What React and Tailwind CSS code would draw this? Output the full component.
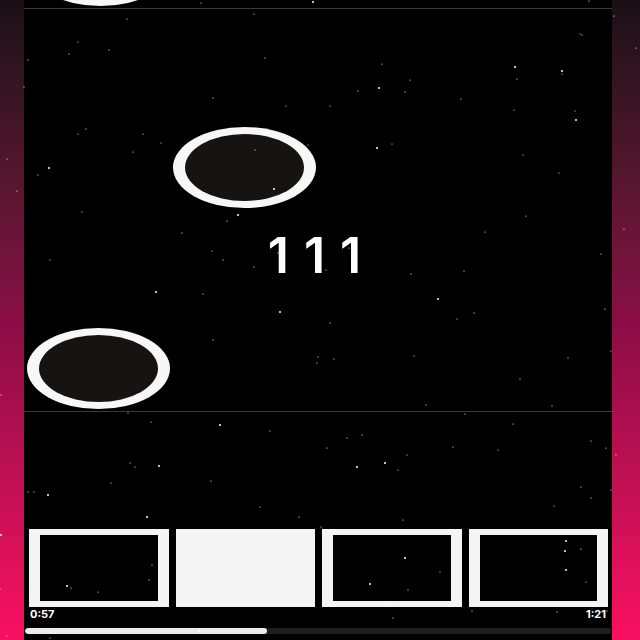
import React from 'react';

// deterministic star field
const makeStars = (count, seed) => {
  let s = seed;
  const rnd = () => {
    s = (s * 16807) % 2147483647;
    return (s - 1) / 2147483646;
  };
  return Array.from({ length: count }, () => ({
    x: Math.round(rnd() * 640),
    y: Math.round(rnd() * 640),
    r: rnd() > 0.8 ? 1 : 0.6,
  }));
};

const stars = makeStars(150, 7);

const Ring = ({ fill, className }) => (
  <div className={`w-[143px] h-[81px] rounded-[50%] bg-[#f7f7f7] px-[12px] py-[7px] ${className}`}>
    <div className={`w-full h-full rounded-[50%] ${fill}`} />
  </div>
);

const Thumb = ({ filled }) => (
  <div className={`h-[78px] border-x-[11px] border-y-[6px] border-[#f4f4f4] ${filled ? 'bg-[#f4f4f4]' : 'bg-black'}`} />
);

const App = () => {
  return (
    <div className="relative w-full h-[640px] overflow-hidden bg-gradient-to-b from-[#1a1015] via-[#8a0d45] to-[#fa1060] flex pl-[24px] pr-[28px] font-['Inter',sans-serif]">
      <div className="flex-1 h-full bg-black flex flex-col">
        {/* top strip */}
        <div className="relative h-[9px] border-b border-[#3a3a3a] overflow-hidden">
          <Ring fill="bg-[#f0106a]" className="absolute left-[5px] bottom-[2px]" />
        </div>

        {/* play canvas */}
        <div className="relative h-[403px] border-b border-[#3a3a3a]">
          <Ring fill="bg-[#171313]" className="absolute left-[149px] top-[118px]" />
          <div className="absolute left-0 right-0 top-[221px] flex justify-center pl-[8px]">
            <span className="text-white text-[50px] leading-none font-semibold tracking-[0.3em]">111</span>
          </div>
          <Ring fill="bg-[#171313]" className="absolute left-[3px] top-[319px]" />
        </div>

        <div className="flex-1" />

        {/* thumbnails */}
        <div className="grid grid-cols-4 gap-[7px] pl-[5px] pr-[4px]">
          <Thumb />
          <Thumb filled />
          <Thumb />
          <Thumb />
        </div>

        <div className="flex justify-between px-[6px] text-white text-[11px] font-bold leading-[14px]">
          <span>0:57</span>
          <span>1:21</span>
        </div>

        <div className="mt-[7px] mb-[6px] h-[6px] rounded-full bg-[#1e1e1e] overflow-hidden mx-[1px]">
          <div className="h-full w-[242px] rounded-full bg-[#ececec]" />
        </div>
      </div>

      <svg className="absolute inset-0 pointer-events-none" width="640" height="640">
        {stars.map((st, i) => (
          <circle key={i} cx={st.x} cy={st.y} r={st.r} fill="#ffffff" />
        ))}
      </svg>
    </div>
  );
};

export default App;
